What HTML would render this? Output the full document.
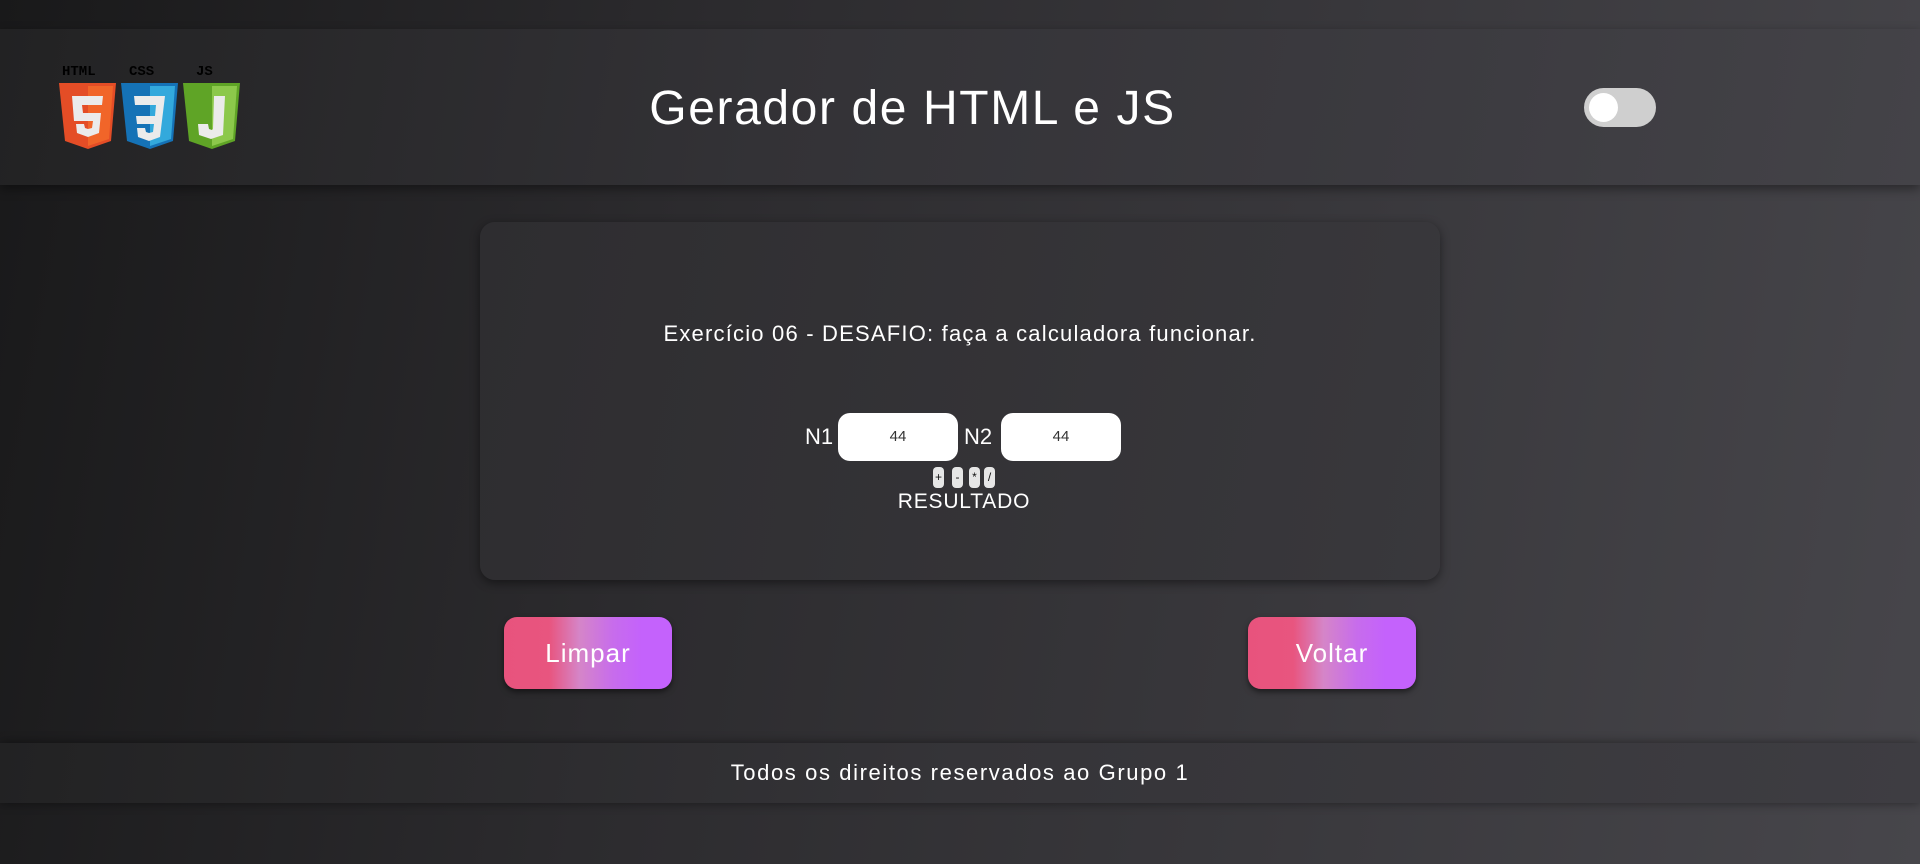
<!DOCTYPE html>
<html><head><meta charset="utf-8"><style>
*{margin:0;padding:0;box-sizing:border-box}
body{width:1920px;height:864px;overflow:hidden;font-family:"Liberation Sans",sans-serif;color:#fff;
background:linear-gradient(100deg,#19191a 0%,#2c2b2e 35%,#38373b 65%,#47464b 100%);position:relative}
.hdr{position:absolute;left:0;top:29px;width:1920px;height:156px;background:linear-gradient(100deg,#222223 0%,#333236 40%,#3c3b40 75%,#444348 100%);box-shadow:0 4px 10px rgba(0,0,0,.4)}
.title{position:absolute;left:0;width:1825px;text-align:center;top:80px;font-size:48px;line-height:58px;letter-spacing:1.6px}
.tog{position:absolute;left:1584px;top:88px;width:72px;height:39px;border-radius:20px;background:#cfcfcf}
.tog:after{content:"";position:absolute;left:5px;top:5px;width:29px;height:29px;border-radius:50%;background:#fff}
.card{position:absolute;left:480px;top:222px;width:960px;height:358px;border-radius:15px;background:linear-gradient(100deg,#2e2d30,#39383c);box-shadow:0 3px 10px rgba(0,0,0,.45)}
.ex{position:absolute;left:480px;width:960px;top:321px;text-align:center;font-size:22px;letter-spacing:1.2px}
.lbl{position:absolute;font-size:22px;top:424px}
.inp{position:absolute;top:413px;width:120px;height:48px;border-radius:12px;background:#fff;color:#333;font-size:15px;text-align:center;line-height:48px}
.op{position:absolute;top:467px;width:11px;height:21px;border-radius:4px;background:#e6e6e6;color:#111;font-size:12px;text-align:center;line-height:21px}
.res{position:absolute;left:880px;width:168px;text-align:center;top:490px;font-size:21px;letter-spacing:.8px}
.btn{position:absolute;top:617px;width:168px;height:72px;border-radius:13px;background:linear-gradient(90deg,#e8537d 0%,#e8557f 27%,#d585c8 45%,#c76cec 65%,#c462fc 82%);box-shadow:0 3px 6px rgba(0,0,0,.5);font-size:26px;text-align:center;line-height:72px;letter-spacing:1px}
.ftr{position:absolute;left:0;top:743px;width:1920px;height:60px;background:linear-gradient(100deg,#222223,#353438 50%,#3e3d42);box-shadow:0 0 10px rgba(0,0,0,.45);text-align:center;font-size:22px;line-height:60px;letter-spacing:1.6px}
</style></head><body>
<div class="hdr"></div>
<svg style="position:absolute;left:58px;top:64px" width="184" height="86" viewBox="0 0 184 86">
<g font-family="Liberation Mono,monospace" font-weight="bold" font-size="14" fill="#000"><text x="4" y="11">HTML</text><text x="71" y="11">CSS</text><text x="138" y="11">JS</text></g>
<path d="M1 19h57l-5 58-23 8-23-8z" fill="#e44d26"/><path d="M30 22h25l-4 53-21 7z" fill="#f16529"/>
<path d="M14 32h31l-1 9H24l1 8h18l-2 20-11 4-11-4-1-9h8l1 4 3 1 4-1 1-7H16z" fill="#ebebeb"/>
<path d="M63 19h57l-5 58-23 8-23-8z" fill="#1572b6"/><path d="M92 22h25l-4 53-21 7z" fill="#33a9dc"/>
<path d="M76 32h31l-5 41-11 4-11-4-1-9h8l1 4 3 1 4-1 1-8H79l-1-8h19l1-11H77z" fill="#ebebeb"/>
<path d="M125 19h57l-5 58-23 8-23-8z" fill="#5fa426"/><path d="M154 22h25l-4 53-21 7z" fill="#8cc84b"/>
<path d="M155 32h12l-2 39-12 4-12-4-1-11h10l1 5 3 1 1-1 1-33h-1z" fill="#ebebeb"/>
</svg>
<div class="title">Gerador de HTML e JS</div>
<div class="tog"></div>
<div class="card"></div>
<div class="ex">Exercício 06 - DESAFIO: faça a calculadora funcionar.</div>
<div class="lbl" style="left:805px">N1</div>
<div class="inp" style="left:838px">44</div>
<div class="lbl" style="left:964px">N2</div>
<div class="inp" style="left:1001px">44</div>
<div class="op" style="left:933px">+</div><div class="op" style="left:952px">-</div><div class="op" style="left:969px">*</div><div class="op" style="left:984px">/</div>
<div class="res">RESULTADO</div>
<div class="btn" style="left:504px">Limpar</div>
<div class="btn" style="left:1248px">Voltar</div>
<div class="ftr">Todos os direitos reservados ao Grupo 1</div>
</body></html>
